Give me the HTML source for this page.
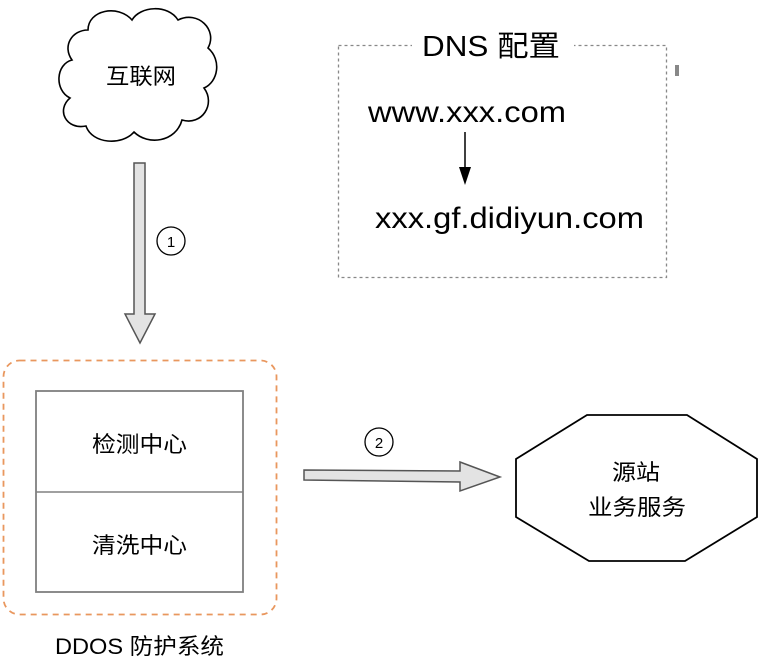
<!DOCTYPE html>
<html><head><meta charset="utf-8"><style>
html,body{margin:0;padding:0;background:#fff;}
svg{display:block;}
text{font-family:"Liberation Sans","Noto Sans CJK SC",sans-serif;fill:#000;}
</style></head><body>
<svg width="762" height="672" viewBox="0 0 762 672" xmlns="http://www.w3.org/2000/svg">
<path d="M88,30 C88,10 118,4 132,20 C140,6 168,4 178,20 C198,10 218,30 208,48 C222,60 218,82 204,88 C216,104 202,126 182,120 C176,142 148,146 134,132 C122,146 92,144 86,126 C66,130 56,110 70,98 C54,90 56,64 72,60 C62,46 72,30 88,30 Z" fill="#fff" stroke="#000" stroke-width="1.6"/>
<text x="106" y="84" font-size="22" textLength="70" lengthAdjust="spacingAndGlyphs">互联网</text>
<path d="M134,163 L145,163 L145,314 L155,314 L140,343 L125,314 L134,314 Z" fill="#e3e3e3" stroke="#555" stroke-width="1.5"/>
<circle cx="171" cy="241" r="14" fill="#fff" stroke="#000" stroke-width="1.3"/>
<text x="171" y="247" font-size="15" text-anchor="middle">1</text>
<rect x="338.5" y="45.5" width="328" height="232" fill="none" stroke="#888" stroke-width="1.3" stroke-dasharray="3,3"/>
<rect x="412" y="28" width="162" height="32" fill="#fff"/>
<text x="422" y="56" font-size="29" textLength="138" lengthAdjust="spacingAndGlyphs">DNS 配置</text>
<rect x="675" y="65" width="4" height="11" fill="#888"/>
<text x="368" y="122" font-size="30" textLength="198" lengthAdjust="spacingAndGlyphs">www.xxx.com</text>
<line x1="465" y1="132" x2="465" y2="170" stroke="#000" stroke-width="1.5"/>
<path d="M459,167 L471,167 L465,185 Z" fill="#000"/>
<text x="375" y="228" font-size="30" textLength="269" lengthAdjust="spacingAndGlyphs">xxx.gf.didiyun.com</text>
<rect x="3.5" y="360.5" width="273" height="254" rx="16" fill="none" stroke="#e9975e" stroke-width="1.8" stroke-dasharray="6,5"/>
<rect x="36" y="391" width="207" height="201" fill="#fff" stroke="#808080" stroke-width="1.8"/>
<line x1="36" y1="492" x2="243" y2="492" stroke="#808080" stroke-width="1.6"/>
<text x="92" y="452" font-size="22" textLength="95" lengthAdjust="spacingAndGlyphs">检测中心</text>
<text x="92" y="553" font-size="22" textLength="95" lengthAdjust="spacingAndGlyphs">清洗中心</text>
<text x="55" y="654" font-size="22" textLength="169" lengthAdjust="spacingAndGlyphs">DDOS 防护系统</text>
<path d="M304,470 L460,471 L460,462 L500,477 L460,491 L460,482 L304,480 Z" fill="#e3e3e3" stroke="#555" stroke-width="1.5"/>
<circle cx="379" cy="442" r="14" fill="#fff" stroke="#000" stroke-width="1.3"/>
<text x="379" y="448" font-size="15" text-anchor="middle">2</text>
<path d="M587,415 L687,415 L757,459 L757,517 L685,561 L589,561 L516,517 L516,459 Z" fill="#fff" stroke="#000" stroke-width="1.8"/>
<text x="612" y="480" font-size="22" textLength="48" lengthAdjust="spacingAndGlyphs">源站</text>
<text x="588" y="515" font-size="22" textLength="98" lengthAdjust="spacingAndGlyphs">业务服务</text>
</svg>
</body></html>
